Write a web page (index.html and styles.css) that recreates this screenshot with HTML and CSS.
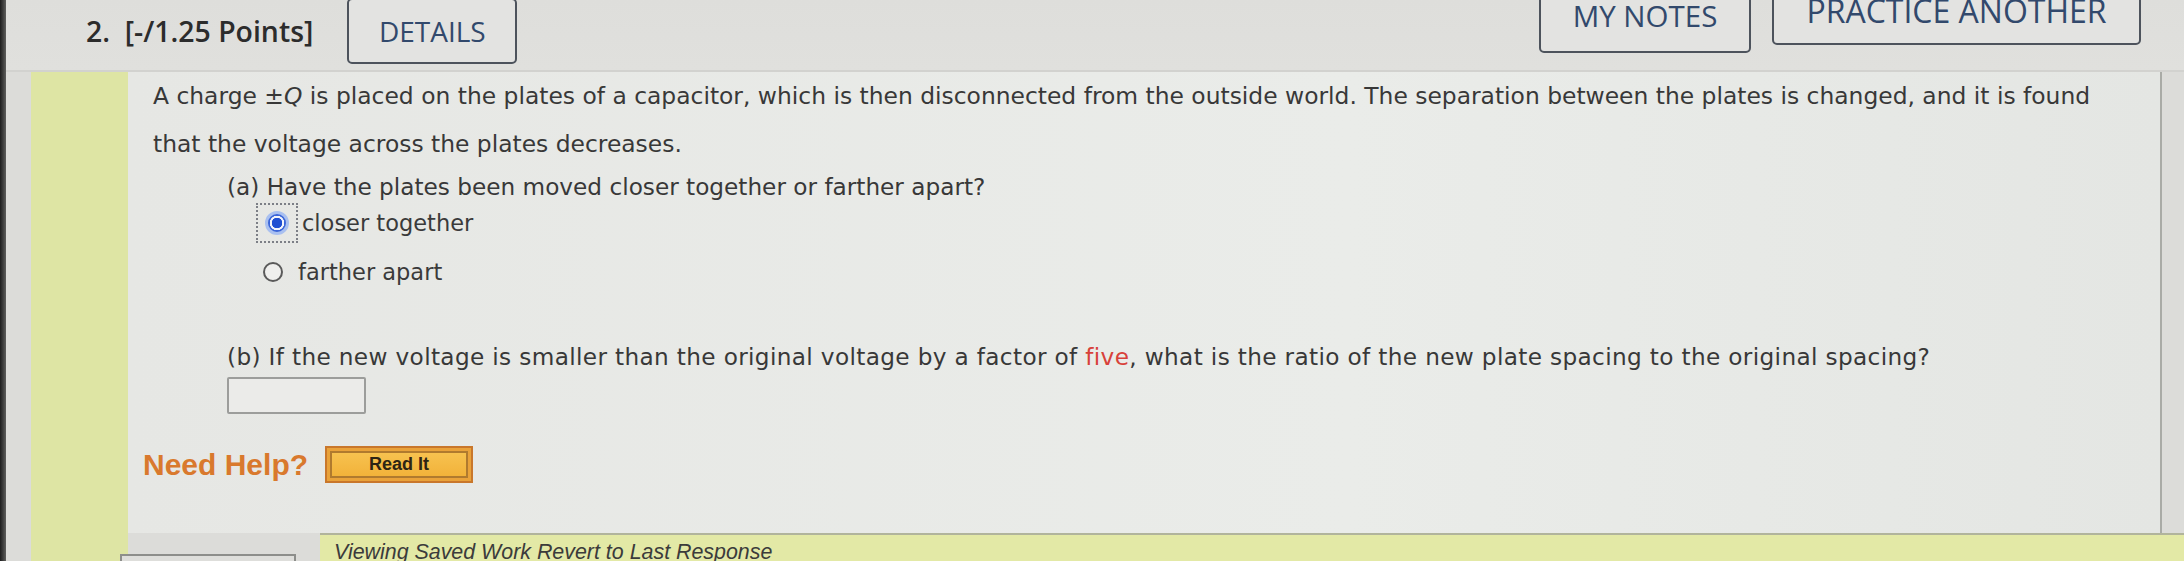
FILE: index.html
```html
<!DOCTYPE html>
<html lang="en">
<head>
<meta charset="utf-8">
<title>Question 2</title>
<link rel="stylesheet" href="styles.css">
</head>
<body>
<div class="screen">
  <div class="bezel"></div>
  <div class="page">
    <header class="qhead">
      <div class="qnum">2.&nbsp; [-/1.25 Points]</div>
      <div class="btn btn-details">DETAILS</div>
      <div class="btn btn-notes">MY NOTES</div>
      <div class="btn btn-practice">PRACTICE ANOTHER</div>
    </header>
    <div class="qbody">
      <div class="stripe"></div>
      <div class="main">
        <section class="content">
          <p class="intro">A charge <span class="q">±<i>Q</i></span> is placed on the plates of a capacitor, which is then disconnected from the outside world. The separation between the plates is changed, and it is found that the voltage across the plates decreases.</p>
          <div class="part">(a) Have the plates been moved closer together or farther apart?</div>
          <div class="options">
            <div class="option">
              <span class="focus"><span class="radio radio-on"></span></span>
              <span class="label">closer together</span>
            </div>
            <div class="option option-2">
              <span class="radio"></span>
              <span class="label">farther apart</span>
            </div>
          </div>
          <div class="part part-b">(b) If the new voltage is smaller than the original voltage by a factor of <span class="red">five</span>, what is the ratio of the new plate spacing to the original spacing?</div>
          <div class="answer"></div>
          <div class="help">
            <span class="help-label">Need Help?</span>
            <span class="read-it"><span class="read-inner">Read It</span></span>
          </div>
        </section>
        <div class="bottom">
          <div class="submit-box"></div>
          <div class="saved-bar">Viewing Saved Work <span class="link">Revert to Last Response</span></div>
        </div>
      </div>
    </div>
  </div>
</div>
</body>
</html>
```
FILE: styles.css
```css
html, body {
  margin: 0;
  padding: 0;
}
body {
  width: 2184px;
  height: 561px;
  overflow: hidden;
  background: #dcdcd9;
  font-family: "DejaVu Sans", Verdana, sans-serif;
  color: #383838;
}
.screen {
  display: flex;
  height: 561px;
}
.bezel {
  flex: none;
  width: 6px;
  background: linear-gradient(to right, #1c1c1c, #5f5f5d);
}
.page {
  flex: 1;
  display: flex;
  flex-direction: column;
  min-width: 0;
}

/* header */
.qhead {
  flex: none;
  height: 72px;
  box-sizing: border-box;
  display: flex;
  align-items: flex-start;
  padding-left: 80px;
  padding-right: 43px;
  border-bottom: 2px solid #d2d2cf;
  background: linear-gradient(to bottom, #dededb, #e0e0dd);
}
.qnum {
  font-family: "Open Sans", sans-serif;
  font-weight: 600;
  font-size: 28.4px;
  line-height: 38px;
  margin-top: 12px;
  color: #2c2c2c;
  white-space: nowrap;
}
.btn {
  flex: none;
  box-sizing: border-box;
  display: flex;
  align-items: center;
  justify-content: center;
  border: 2px solid #4d535c;
  border-radius: 5px;
  background: #e3e3e1;
  color: #32496c;
  font-family: "Open Sans", sans-serif;
  font-size: 28px;
  white-space: nowrap;
}
.btn-details {
  margin-left: 34px;
  margin-top: -2px;
  width: 170px;
  height: 66px;
}
.btn-notes {
  margin-left: auto;
  margin-top: -10px;
  width: 212px;
  height: 63px;
  padding-bottom: 13px;
  font-size: 29.5px;
}
.btn-practice {
  margin-left: 21px;
  margin-top: -15px;
  width: 369px;
  height: 60px;
  padding-bottom: 10px;
  font-size: 32px;
}

/* body */
.qbody {
  flex: 1;
  display: flex;
  min-height: 0;
}
.stripe {
  flex: none;
  width: 97px;
  margin-left: 25px;
  background: #dee5a4;
}
.main {
  flex: 1;
  display: flex;
  flex-direction: column;
  min-width: 0;
}
.content {
  flex: none;
  height: 461px;
  box-sizing: border-box;
  margin-right: 22px;
  padding-left: 25px;
  background: linear-gradient(to right, #e6e7e4, #eaece9 60%, #e4e6e3);
  border-right: 2px solid #a9aba6;
}
.intro {
  margin: 0;
  width: 1968px;
  font-size: 23.4px;
  line-height: 48px;
}
.q {
  white-space: nowrap;
}
.part {
  margin: 3px 0 0 74px;
  font-size: 23.2px;
  line-height: 32px;
}
.part-b {
  margin-top: 49px;
  letter-spacing: 0.35px;
}
.red {
  color: #d8413a;
}
.options {
  margin-left: 103px;
  display: flex;
  flex-direction: column;
  gap: 9px;
}
.option {
  height: 40px;
  display: flex;
  align-items: center;
  font-size: 22.5px;
}
.option-2 {
  padding-left: 7px;
}
.focus {
  display: flex;
  align-items: center;
  justify-content: center;
  width: 42px;
  height: 40px;
  box-sizing: border-box;
  border: 2px dotted #7c7f86;
}
.radio {
  display: block;
  width: 20px;
  height: 20px;
  box-sizing: border-box;
  border: 2px solid #5a5a5a;
  border-radius: 50%;
  background: #efefed;
}
.radio-on {
  width: 24px;
  height: 24px;
  border: 3px solid #a9c0f0;
  background: radial-gradient(circle, #1f4fd2 0 5px, #f2f4fb 5.5px 7px, #3c66d8 7.5px);
}
.label {
  margin-left: 4px;
  color: #3a3a3a;
}
.option-2 .label {
  margin-left: 15px;
}
.answer {
  margin: 4px 0 0 74px;
  width: 139px;
  height: 37px;
  box-sizing: border-box;
  border: 2px solid #9c9d9b;
  border-radius: 2px;
  background: #ebebe9;
}
.help {
  margin: 32px 0 0 -10px;
  display: flex;
  align-items: center;
  height: 37px;
}
.help-label {
  font-family: "Liberation Sans", Arial, sans-serif;
  font-weight: bold;
  font-size: 30px;
  color: #d9792d;
}
.read-it {
  margin-left: 17px;
  width: 148px;
  height: 37px;
  box-sizing: border-box;
  padding: 3px;
  border: 2px solid #c9772b;
  background: #e9a23a;
  display: flex;
}
.read-inner {
  flex: 1;
  display: flex;
  align-items: center;
  justify-content: center;
  border: 2px solid #b07a2e;
  background: linear-gradient(to bottom, #f7c24f, #f2b23a);
  font-family: "Liberation Sans", Arial, sans-serif;
  font-weight: bold;
  font-size: 18px;
  color: #2d2414;
}

/* bottom */
.bottom {
  flex: 1;
  display: flex;
  align-items: flex-start;
}
.submit-box {
  flex: none;
  width: 176px;
  height: 20px;
  margin-top: 21px;
  margin-left: -8px;
  box-sizing: border-box;
  border: 2px solid #8d8e8b;
  background: #dededb;
}
.saved-bar {
  flex: 1;
  margin-left: 24px;
  height: 40px;
  box-sizing: border-box;
  border-top: 2px solid #b1b49c;
  background: #e3e9a6;
  padding: 4px 0 0 14px;
  font-family: "Liberation Sans", Arial, sans-serif;
  font-style: italic;
  font-size: 21.4px;
  line-height: 26px;
  color: #3b3b3b;
}
.link {
  text-decoration: underline;
}
```
